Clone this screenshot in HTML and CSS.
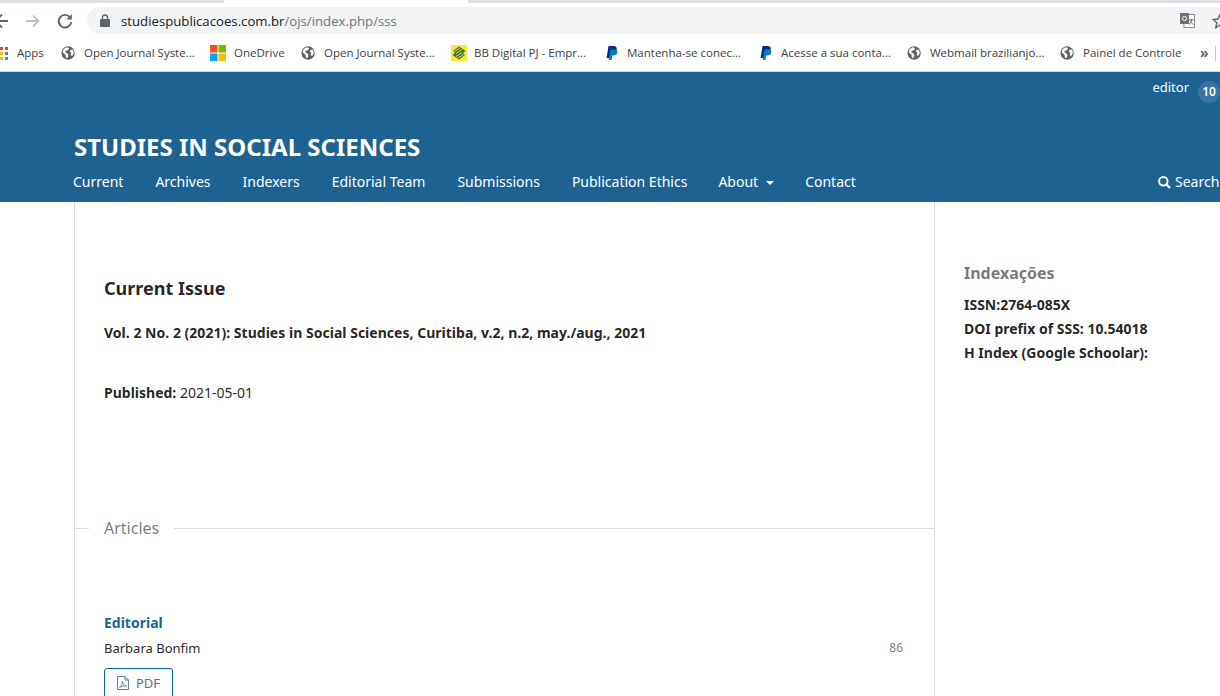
FILE: index.html
```html
<!DOCTYPE html>
<html lang="en">
<head>
<meta charset="utf-8">
<title>Studies in Social Sciences</title>
<link rel="stylesheet" href="styles.css">
</head>
<body>
<svg class="defs" width="0" height="0" aria-hidden="true">
  <defs>
    <symbol id="globe" viewBox="0 -1 18 18">
      <circle cx="8" cy="8" r="7.500" fill="#5f6368"/>
      <path d="M3 3.500 6.500 1.500 9 2.500 8 5 5.500 5.500 5 7.500 7.500 8.500 8.500 11 7 14 5.500 13 5 10 2 7.500Z M10.500 4.500 13.500 4 14.500 8 12.500 11.500 11 10.500 11.500 7.500 10 6.500Z" fill="#fff"/>
    </symbol>
    <symbol id="paypal" viewBox="0 0 16 16">
      <path d="M4.500 1h5c2.600 0 3.600 1.500 3.200 3.600-.5 2.600-2.300 3.700-4.600 3.700H6.800L6 13H2.600Z" fill="#003087"/>
      <path d="M6.600 4.500h5.300c1.500.4 1.700 1.700 1.400 3-.5 2.200-2 3-4 3H8.200L7.500 15H4.700Z" fill="#0a7cc7"/>
    </symbol>
  </defs>
</svg>

<div class="tabstrip">
  <div class="tab-bg tab-left"></div>
  <div class="tab-active"></div>
  <div class="tab-bg tab-right"></div>
</div>

<div class="toolbar">
  <svg class="tool-back" width="14" height="14" viewBox="0 0 14 14"><path d="M14 7H1.500M8 .5 1.500 7 8 13.500" fill="none" stroke="#5f6368" stroke-width="1.800"/></svg>
  <svg class="tool-forward" width="14" height="14" viewBox="0 0 14 14"><path d="M0 7h12.500M7 1.500 12.500 7 7 12.500" fill="none" stroke="#bdc1c6" stroke-width="1.800"/></svg>
  <svg class="tool-reload" width="16" height="16" viewBox="0 0 16 16"><path d="M13 4.300A6.300 6.300 0 1 0 14.300 9" fill="none" stroke="#5f6368" stroke-width="1.900"/><path d="M14.800 1v5.500H9.300Z" fill="#5f6368"/></svg>
  <div class="omnibox">
    <svg class="lock" width="10" height="13" viewBox="0 0 10 13"><path d="M2.500 5V3.500a2.500 2.500 0 0 1 5 0V5" fill="none" stroke="#5f6368" stroke-width="1.300"/><rect y="5" width="10" height="8" rx="1" fill="#5f6368"/></svg>
    <span class="url"><span class="url-host">studiespublicacoes.com.br</span>/ojs/index.php/sss</span>
    <svg class="translate" width="15" height="15" viewBox="0 0 15 15"><rect x="4" y="1.500" width="10.500" height="13" fill="#fff" stroke="#8a8d91"/><rect width="9" height="11" fill="#6d7175"/><circle cx="4.500" cy="5.500" r="2" fill="none" stroke="#fff"/><path d="M9 7h5M11.500 6v1c0 2-1 3.500-2.500 4.500M10.500 8.500c.7 1.300 1.700 2.200 3 3" fill="none" stroke="#6d7175"/></svg>
    <svg class="star" width="16" height="16" viewBox="0 0 16 16"><path d="M8 1.500 10 6l4.800.5-3.600 3.200 1 4.800L8 12l-4.200 2.500 1-4.800L1.200 6.500 6 6Z" fill="none" stroke="#5f6368" stroke-width="1.400"/></svg>
  </div>
</div>

<div class="bookmarks">
  <div class="bm bm-apps">
    <svg class="apps-grid" width="8" height="13" viewBox="0 0 8 13">
      <rect x="0" y="0" width="3" height="3" fill="#ea4335"/><rect x="5" y="0" width="3" height="3" fill="#ea4335"/>
      <rect x="0" y="5" width="3" height="3" fill="#fbbc05"/><rect x="5" y="5" width="3" height="3" fill="#34a853"/>
      <rect x="0" y="10" width="3" height="3" fill="#fbbc05"/><rect x="5" y="10" width="3" height="3" fill="#4285f4"/>
    </svg>
    <span>Apps</span>
  </div>
  <div class="bm"><svg class="bm-icon"><use href="#globe"/></svg><span>Open Journal Syste...</span></div>
  <div class="bm">
    <svg class="bm-icon bm-icon-wide" viewBox="0 0 16 16"><rect width="7.500" height="7.500" fill="#f25022"/><rect x="8.500" width="7.500" height="7.500" fill="#7fba00"/><rect y="8.500" width="7.500" height="7.500" fill="#00a4ef"/><rect x="8.500" y="8.500" width="7.500" height="7.500" fill="#ffb900"/></svg>
    <span>OneDrive</span>
  </div>
  <div class="bm"><svg class="bm-icon"><use href="#globe"/></svg><span>Open Journal Syste...</span></div>
  <div class="bm">
    <svg class="bm-icon" viewBox="0 0 16 16"><rect width="16" height="16" fill="#f4ea3a"/><path d="M8 1.500 14.500 6 12 8 14 10 8 14.500 1.500 10 4 8 2 6Z" fill="#3d6b3a"/><path d="M3.500 6.500 9 3M5 8.500 11 4.500M5 11.500 11 7.500M7 13 12.500 9.500" fill="none" stroke="#f4ea3a" stroke-width="1"/></svg>
    <span>BB Digital PJ - Empr...</span>
  </div>
  <div class="bm"><svg class="bm-icon"><use href="#paypal"/></svg><span>Mantenha-se conec...</span></div>
  <div class="bm"><svg class="bm-icon"><use href="#paypal"/></svg><span>Acesse a sua conta...</span></div>
  <div class="bm"><svg class="bm-icon"><use href="#globe"/></svg><span>Webmail brazilianjo...</span></div>
  <div class="bm"><svg class="bm-icon"><use href="#globe"/></svg><span>Painel de Controle</span></div>
  <div class="bm-more">»</div>
  <div class="bm-sep"></div>
</div>

<header class="site-header">
  <div class="user-row">
    <span class="user-name">editor</span>
    <span class="badge">10</span>
  </div>
  <div class="site-title">STUDIES IN SOCIAL SCIENCES</div>
  <nav class="nav">
    <a class="nav-link">Current</a>
    <a class="nav-link">Archives</a>
    <a class="nav-link">Indexers</a>
    <a class="nav-link">Editorial Team</a>
    <a class="nav-link">Submissions</a>
    <a class="nav-link nav-link-tight">Publication Ethics</a>
    <a class="nav-link nav-link-tight">About<span class="caret"></span></a>
    <a class="nav-link">Contact</a>
    <a class="nav-search">
      <svg width="13" height="13" viewBox="0 0 13 13"><circle cx="5.300" cy="5.300" r="4.200" fill="none" stroke="#fff" stroke-width="2"/><path d="M8.500 8.500 12 12" stroke="#fff" stroke-width="2.400"/></svg>
      Search
    </a>
  </nav>
</header>

<div class="page">
  <main class="content">
    <h1 class="issue-heading">Current Issue</h1>
    <p class="issue-title">Vol. 2 No. 2 (2021): Studies in Social Sciences, Curitiba, v.2, n.2, may./aug., 2021</p>
    <p class="published"><strong>Published:</strong> 2021-05-01</p>
    <div class="section-rule"><span>Articles</span></div>
    <div class="article">
      <a class="article-title">Editorial</a>
      <div class="article-meta"><span>Barbara Bonfim</span><span class="pages">86</span></div>
      <a class="pdf-btn">
        <svg width="12" height="14" viewBox="0 0 12 14"><path d="M.5.500h7.500l3.500 3.500v9.500H.5Z M8 .5V4h3.500" fill="none" stroke="#5f7f97"/><path d="M2.500 11.500C4.500 10 5.500 7.500 5.500 5c0 2.500 1.500 4.500 4 5-2.500-.3-5 .3-7 1.500Z" fill="none" stroke="#5f7f97" stroke-width=".9"/></svg>
        PDF
      </a>
    </div>
  </main>
  <aside class="sidebar">
    <h2 class="side-heading">Indexações</h2>
    <p class="side-line">ISSN:2764-085X</p>
    <p class="side-line">DOI prefix of SSS: 10.54018</p>
    <p class="side-line">H Index (Google Schoolar):</p>
  </aside>
</div>
</body>
</html>
```
FILE: styles.css
```css
* { box-sizing: border-box; }
html, body { margin: 0; padding: 0; height: 696px; overflow: hidden; background: #fff; }
body { font-family: "Noto Sans", "Open Sans", sans-serif; font-size: 14px; line-height: 20px; color: rgba(0,0,0,.87); width: 1220px; }
.defs { display: block; height: 0; }

.tabstrip { display: flex; height: 4px; background: #fff; }
.tab-bg { background: #dee1e6; height: 3px; }
.tab-left { width: 224px; }
.tab-active { width: 244px; }
.tab-right { flex: 1; }

.toolbar { display: flex; align-items: center; height: 34px; background: #fff; overflow: hidden; }
.toolbar svg { flex: none; }
.tool-back { margin-left: -6px; }
.tool-forward { margin-left: 18px; }
.tool-reload { margin-left: 17px; }
.omnibox { display: flex; flex: none; align-items: center; width: 1145px; height: 27px; margin-left: 14px; margin-top: -1px; padding: 0 4px 0 13px; background: #f1f3f4; border-radius: 14px; }
.lock { margin-right: 11px; }
.url { font-family: "Open Sans", sans-serif; font-size: 13.2px; color: #70757a; white-space: nowrap; flex: 1; }
.url-host { color: #202124; }
.star { margin-left: 17px; }

.bookmarks { display: grid; grid-template-columns: 61px 149px 91px 150px 153px 154px 149px 153px 140px 15px 5px; align-items: center; height: 34px; background: #fff; border-bottom: 1px solid #d5d9dd; font-family: "Open Sans", sans-serif; font-size: 11.5px; color: #3c4043; padding-bottom: 3px; }
.bm { display: flex; align-items: center; gap: 7px; white-space: nowrap; min-width: 0; }
.bm-icon { width: 16px; height: 16px; flex: none; }
.bm-icon-wide { margin-right: 1px; }
.bm-apps { gap: 9px; }
.apps-grid { flex: none; }
.bm-more { font-size: 14px; line-height: 14px; font-weight: 700; color: #5f6368; }
.bm-sep { width: 1px; height: 15px; background: #c7c9cc; }

.site-header { height: 130px; background: #1e6292; color: #fff; }
.user-row { display: flex; justify-content: flex-end; height: 46px; padding: 5px 0 0; }
.user-name { font-size: 13px; line-height: 20px; }
.badge { width: 22px; height: 22px; margin: 4px 0 0 9px; border-radius: 50%; background: #3a76a2; font-size: 12px; font-weight: 600; line-height: 22px; text-align: center; }
.site-title { height: 44px; padding: 12px 0 0 74px; font-size: 24px; line-height: 34px; font-weight: 700; white-space: nowrap; }
.nav { display: flex; align-items: center; width: 1240px; height: 40px; padding: 0 0 0 73px; }
.nav-link { margin-right: 32px; white-space: nowrap; }
.nav-link-tight { margin-right: 31px; }
.caret { display: inline-block; margin-left: 8px; vertical-align: middle; border-top: 4px solid #fff; border-left: 4px solid transparent; border-right: 4px solid transparent; }
.nav-search { display: flex; align-items: center; gap: 4px; margin-left: auto; width: 82px; white-space: nowrap; }

.page { display: flex; align-items: stretch; height: 494px; padding-left: 74px; overflow: hidden; }
.content { flex: none; width: 861px; border-left: 1px solid #ddd; border-right: 1px solid #ddd; padding-top: 73px; }
.issue-heading { margin: 0 0 0 29px; font-size: 18px; line-height: 26px; font-weight: 700; }
.issue-title { margin: 22px 0 0 29px; font-weight: 700; line-height: 20px; letter-spacing: .02px; }
.published { margin: 40px 0 0 29px; line-height: 20px; }
.published strong { font-weight: 700; }

.section-rule { display: flex; align-items: center; height: 24px; margin-top: 113px; }
.section-rule::before { content: ""; width: 14px; height: 1px; background: #ddd; }
.section-rule::after { content: ""; flex: 1; height: 1px; background: #ddd; }
.section-rule span { padding: 0 15px; font-size: 16px; color: rgba(0,0,0,.54); }

.article { padding: 73px 31px 0 29px; }
.article-title { display: block; font-weight: 700; color: #1e6292; line-height: 20px; }
.article-meta { display: flex; justify-content: space-between; margin-top: 5px; font-size: 13px; line-height: 20px; }
.pages { font-size: 12px; color: rgba(0,0,0,.54); }
.pdf-btn { display: inline-flex; align-items: center; gap: 7px; margin-top: 10px; height: 30px; padding: 0 12px; border: 1px solid #006798; border-radius: 3px; font-size: 13px; color: #5b6f7d; }

.sidebar { flex: none; width: 285px; padding: 59px 0 0 29px; }
.side-heading { margin: 0 0 8px; font-size: 16px; line-height: 24px; font-weight: 700; color: rgba(0,0,0,.54); }
.side-line { margin: 0; font-weight: 700; line-height: 24px; white-space: nowrap; }
```
